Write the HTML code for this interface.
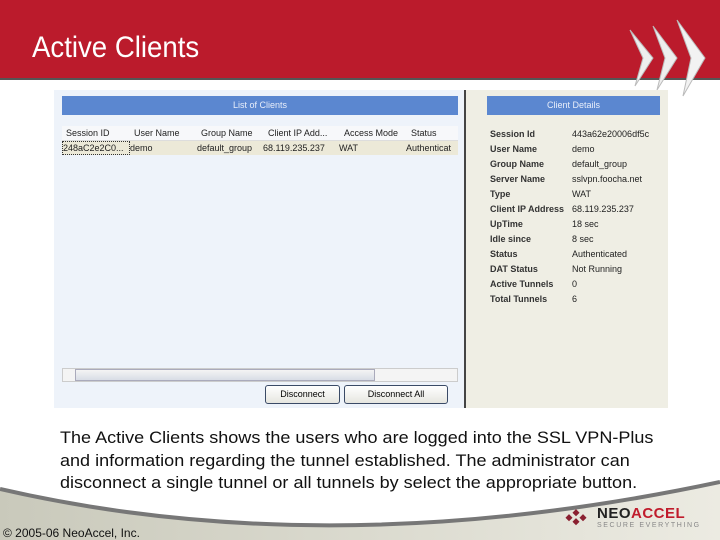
<!DOCTYPE html>
<html><head><style>
body{margin:0;width:720px;height:540px;position:relative;overflow:hidden;background:#fff;font-family:"Liberation Sans",sans-serif}
.hdr{position:absolute;left:0;top:0;width:720px;height:78px;background:#bb1b2c;border-bottom:2px solid #555}
.hdr h1{position:absolute;left:32px;top:31px;margin:0;font-weight:normal;color:#fff;font-size:30px;transform:scaleX(0.92);transform-origin:left}
.abs{position:absolute}
.t{font-size:9px;color:#222;position:absolute;white-space:nowrap}
.bar{position:absolute;background:#5b87d0;color:#e8eefa;font-size:9px;text-align:center;line-height:19px}
.btn{position:absolute;border:1px solid #3a4a66;border-radius:3px;background:linear-gradient(#fff,#e6e6e0);font-size:9px;text-align:center;line-height:17px}
.body{position:absolute;left:60px;top:427px;font-size:16.8px;line-height:22.5px;color:#111;white-space:nowrap;transform:scaleX(1.074);transform-origin:left}
</style></head><body>
<div class="hdr"><h1>Active Clients</h1></div>
<svg class="abs" style="left:625px;top:18px" width="90" height="80">
<polygon points="5,12 28,40 10,68 18,40" fill="#eee" stroke="#bbb"/>
<polygon points="28,8 52,40 32,72 40,40" fill="#eee" stroke="#bbb"/>
<polygon points="52,2 80,40 58,78 66,40" fill="#f2f2f2" stroke="#bbb"/>
</svg>
<div class="abs" style="left:54px;top:90px;width:411px;height:318px;background:#eef3fa"></div>
<div class="abs" style="left:464px;top:90px;width:2px;height:318px;background:#444"></div>
<div class="abs" style="left:466px;top:90px;width:202px;height:318px;background:#efeee4"></div>
<div class="bar" style="left:62px;top:96px;width:396px;height:19px">List of Clients</div>
<div class="abs" style="left:62px;top:126px;width:396px;height:14px;background:#f7f8fa;border-bottom:1px solid #ddd"></div>
<div class="t" style="left:66px;top:128px">Session ID</div>
<div class="t" style="left:134px;top:128px">User Name</div>
<div class="t" style="left:201px;top:128px">Group Name</div>
<div class="t" style="left:268px;top:128px">Client IP Add...</div>
<div class="t" style="left:344px;top:128px">Access Mode</div>
<div class="t" style="left:411px;top:128px">Status</div>
<div class="abs" style="left:62px;top:141px;width:396px;height:14px;background:#ece9d8"></div>
<div class="abs" style="left:62px;top:141px;width:66px;height:12px;border:1px dotted #333"></div>
<div class="t" style="left:63px;top:143px">248aC2e2C0...</div>
<div class="t" style="left:130px;top:143px">demo</div>
<div class="t" style="left:197px;top:143px">default_group</div>
<div class="t" style="left:263px;top:143px">68.119.235.237</div>
<div class="t" style="left:339px;top:143px">WAT</div>
<div class="t" style="left:406px;top:143px">Authenticat</div>
<div class="abs" style="left:62px;top:368px;width:394px;height:12px;background:#f4f4f4;border:1px solid #ccc"></div>
<div class="abs" style="left:75px;top:369px;width:298px;height:10px;background:linear-gradient(#f4f4f4,#d8dde6);border:1px solid #aab"></div>
<div class="btn" style="left:265px;top:385px;width:73px;height:17px">Disconnect</div>
<div class="btn" style="left:344px;top:385px;width:102px;height:17px">Disconnect All</div>
<div class="bar" style="left:487px;top:96px;width:173px;height:19px">Client Details</div>
<div class="t" style="left:490px;top:127px;line-height:15px;font-weight:bold;color:#333">Session Id<br>User Name<br>Group Name<br>Server Name<br>Type<br>Client IP Address<br>UpTime<br>Idle since<br>Status<br>DAT Status<br>Active Tunnels<br>Total Tunnels</div>
<div class="t" style="left:572px;top:127px;line-height:15px">443a62e20006df5c<br>demo<br>default_group<br>sslvpn.foocha.net<br>WAT<br>68.119.235.237<br>18 sec<br>8 sec<br>Authenticated<br>Not Running<br>0<br>6</div>
<div class="body">The Active Clients shows the users who are logged into the SSL VPN-Plus<br>and information regarding the tunnel established. The administrator can<br>disconnect a single tunnel or all tunnels by select the appropriate button.</div>
<svg class="abs" style="left:0;top:480px" width="720" height="60">
<defs><linearGradient id="g" x1="0" x2="1"><stop offset="0" stop-color="#c9c9bb"/><stop offset="1" stop-color="#ecebe2"/></linearGradient></defs>
<path d="M0,9 Q330,85 720,2 L720,60 L0,60Z" fill="url(#g)"/>
<path d="M0,9 Q330,85 720,2" fill="none" stroke="#777" stroke-width="4"/>
</svg>
<div class="abs" style="left:3px;top:526px;font-size:12px;color:#111">© 2005-06 NeoAccel, Inc.</div>
<svg class="abs" style="left:565px;top:507px" width="26" height="20"><g fill="#8a2030"><rect x="2" y="8" width="5" height="5" transform="rotate(45 4 10)"/><rect x="9" y="3" width="5" height="5" transform="rotate(45 11 5)"/><rect x="9" y="12" width="5" height="5" transform="rotate(45 11 14)"/><rect x="16" y="8" width="5" height="5" transform="rotate(45 18 10)"/></g></svg>
<div class="abs" style="left:597px;top:505px;font-size:15px;font-weight:bold;letter-spacing:0.5px"><span style="color:#222">NEO</span><span style="color:#c01c2c">ACCEL</span></div>
<div class="abs" style="left:597px;top:522px;font-size:7px;letter-spacing:1.6px;color:#888">SECURE EVERYTHING</div>
</body></html>
